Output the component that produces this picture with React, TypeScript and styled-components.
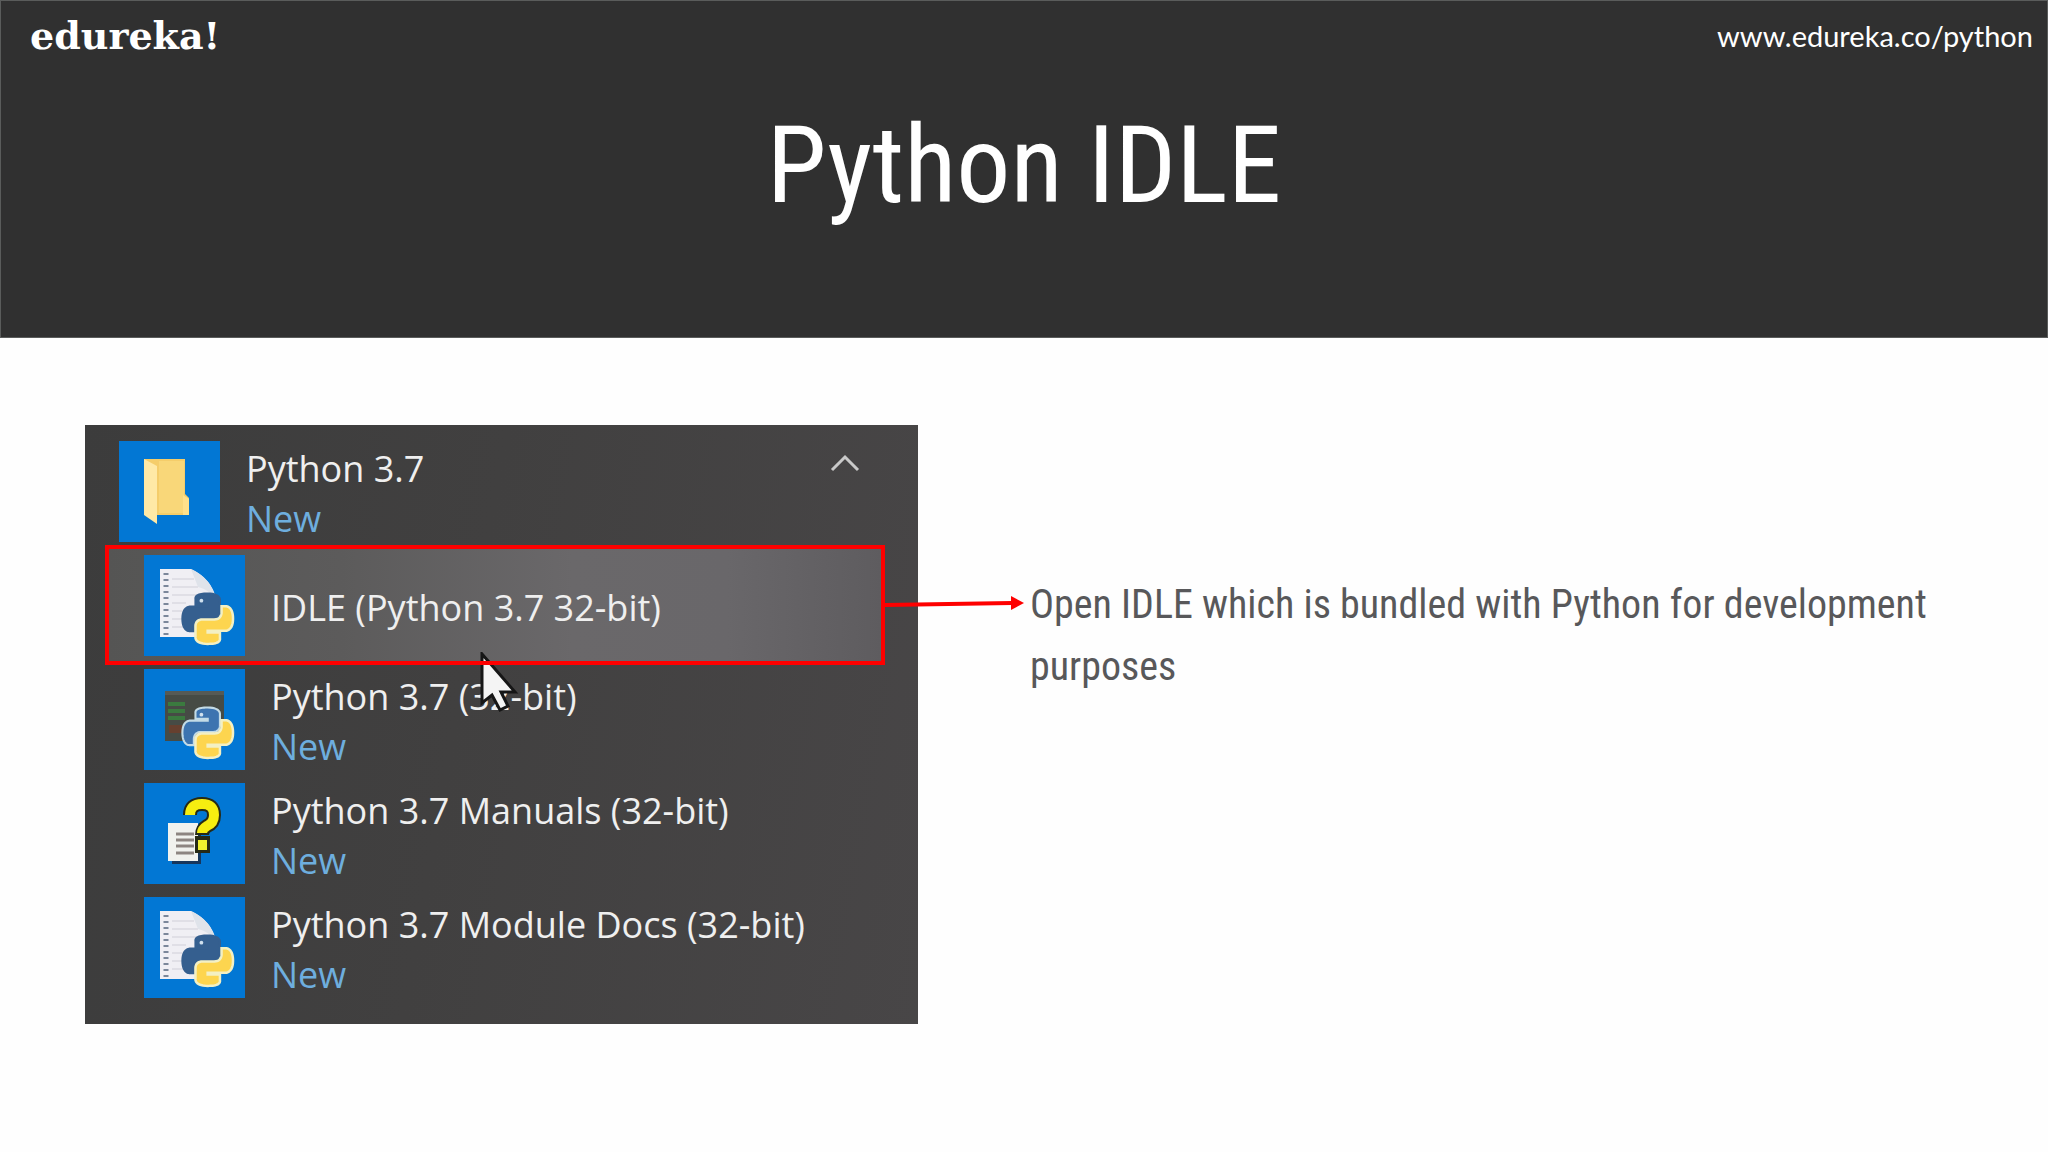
import React from "react";
import styled, { createGlobalStyle, css } from "styled-components";

const GlobalStyle = createGlobalStyle`
  *, *::before, *::after { box-sizing: border-box; }
  body { margin: 0; background: #fefefe; }
`;

const displayFont = css`
  font-family: "Roboto Condensed", "Liberation Sans Narrow", "DejaVu Sans Condensed", sans-serif;
`;

const Slide = styled.div`
  min-height: 100vh;
  background: #fefefe;
`;

const Header = styled.header`
  min-height: 338px;
  background: #303030;
  border: 1px solid #5a5c5b;
`;

const TopBar = styled.div`
  display: flex;
  justify-content: space-between;
  align-items: center;
  height: 70px;
  padding: 0 14px 0 29px;
`;

const Logo = styled.a`
  color: #ffffff;
  font: bold 38px/40px "DejaVu Serif", serif;
  text-decoration: none;
`;

const SiteLink = styled.a`
  color: #ffffff;
  font: 29px/40px Lato, sans-serif;
  text-decoration: none;
`;

const Title = styled.h1`
  ${displayFont}
  margin: 0;
  color: #ffffff;
  font-size: 108px;
  font-weight: 400;
  line-height: 188px;
  text-align: center;
`;

const Content = styled.main`
  display: grid;
  grid-template-columns: minmax(0, 7fr) minmax(0, 8fr);
  column-gap: 112px;
  align-items: start;
  padding: 87px 66px 64px 85px;
`;

const StartMenu = styled.nav`
  position: relative;
  padding: 9px 36px 20px 23px;
  background: linear-gradient(100deg, #3c3c3c 0%, #414040 45%, #484647 100%);
`;

const MenuList = styled.ul`
  margin: 0;
  padding: 0;
  list-style: none;
`;

const MenuEntry = styled.li`
  position: relative;
`;

const MenuButton = styled.button<{ $nested?: boolean; $active?: boolean }>`
  display: flex;
  align-items: center;
  gap: 26px;
  width: 100%;
  height: 114px;
  padding: 0 0 0 ${(p) => (p.$nested ? 36 : 11)}px;
  border: 0;
  background: ${(p) =>
    p.$active ? "linear-gradient(90deg, #555554 0%, #5c5b5b 30%, #6a686a 60%, #69676a 80%, #5e5c5f 100%)" : "transparent"};
  outline: ${(p) => (p.$active ? "4px solid #fe0000" : "none")};
  outline-offset: -1px;
  color: #efefef;
  font: 36px/50px "Open Sans", "Noto Sans", sans-serif;
  text-align: left;
`;

const Tile = styled.span`
  display: block;
  flex: none;
  width: 101px;
  height: 101px;
  background: #0277d4;
`;

const Labels = styled.span`
  display: flex;
  flex: 1;
  flex-direction: column;
  padding-top: 6px;
  white-space: nowrap;
`;

const NewTag = styled.span`
  color: #6eaede;
`;

const Chevron = styled.svg`
  flex: none;
  align-self: flex-start;
  width: 32px;
  height: 20px;
  margin: 19px 21px 0 0;
`;

const Arrow = styled.svg`
  position: absolute;
  top: 46px;
  left: 100%;
  width: 142px;
  height: 20px;
`;

const Pointer = styled.svg`
  position: absolute;
  top: 104px;
  left: 371px;
  width: 42px;
  height: 62px;
  z-index: 1;
`;

const Note = styled.p`
  ${displayFont}
  margin: 149px 0 0;
  color: #58585a;
  font-size: 40px;
  line-height: 62px;
`;

const Art = styled.svg`
  display: block;
  width: 100%;
  height: 100%;
`;

const SNAKE =
  "M14.25.18l.9.2.73.26.59.3.45.32.34.34.25.34.16.33.1.3.04.26.02.2-.01.13V8.5l-.05.63-.13.55-.21.46-.26.38-.3.31-.33.25-.35.19-.35.14-.33.1-.3.07-.26.04-.21.02H8.77l-.69.05-.59.14-.5.22-.41.27-.33.32-.27.35-.2.36-.15.37-.1.35-.07.32-.04.27-.02.21v3.06H3.17l-.21-.03-.28-.07-.32-.12-.35-.18-.36-.26-.36-.36-.35-.46-.32-.59-.28-.73-.21-.88-.14-1.05-.05-1.23.06-1.22.16-1.04.24-.87.32-.71.36-.57.4-.44.42-.33.42-.24.4-.16.36-.1.32-.05.24-.01h.16l.06.01h8.16v-.83H6.18l-.01-2.75-.02-.37.05-.34.11-.31.17-.28.25-.26.31-.23.38-.2.44-.18.51-.15.58-.12.64-.1.71-.06.77-.04.84-.02 1.27.05z";

const PythonLogo = ({ blue, edge }: { blue: string; edge: string }) => (
  <g transform="translate(38.5 38.5) scale(2.1)">
    <path d={SNAKE} fill={blue} stroke={edge} strokeWidth="1" />
    <path d={SNAKE} transform="rotate(180 12 12)" fill="#fdd54f" stroke="#f3f0c4" strokeWidth="1.2" />
    <circle cx="9" cy="3.4" r=".9" fill="#cfe0ee" />
  </g>
);

const FolderArt = () => (
  <Art viewBox="0 0 101 101" aria-hidden="true">
    <path d="M25 18h41v35l4 4v17H35z" fill="#f5cd6a" />
    <path d="M40 20h25v52H40z" fill="#f9d779" />
    <path d="M25 18l13 7v58L25 74z" fill="#ffe9a6" />
    <path d="M64 54l6 4v16h-6z" fill="#ffe08a" />
  </Art>
);

const NotebookArt = () => (
  <Art viewBox="0 0 101 101" aria-hidden="true">
    <path d="M16 14h31q21 10 25 30v28L58 82H16z" fill="#f0eff4" />
    <path d="M47 14q20 9 25 30-8-10-18-12z" fill="#dfe3ea" />
    <path d="M28 24h22M28 32h26M28 40h25M28 48h14M28 56h10M28 64h10M28 72h14" stroke="#e0dfe6" strokeWidth="2" />
    <path d="M22 18v62" stroke="#7b879a" strokeWidth="5" strokeDasharray="2 4" />
    <PythonLogo blue="#355f8f" edge="#355f8f" />
  </Art>
);

const ConsoleArt = () => (
  <Art viewBox="0 0 101 101" aria-hidden="true">
    <path d="M21 22h59v50H21z" fill="#464b45" />
    <path d="M21 22h59v4H21z" fill="#565a55" />
    <path d="M24 35h17M24 42h17M24 49h17" stroke="#3b7a3f" strokeWidth="4" />
    <path d="M25 60h13" stroke="#66402f" strokeWidth="8" />
    <PythonLogo blue="#3d74b0" edge="#c3dbe6" />
  </Art>
);

const HelpArt = () => (
  <Art viewBox="0 0 101 101" aria-hidden="true">
    <path d="M28 43h29v38H28z" fill="#16365c" />
    <path d="M24 40h30v38H24z" fill="#f1f2ee" />
    <path d="M32 51h18M32 57h18M32 63h18M32 70h18" stroke="#8d8581" strokeWidth="3" />
    <path d="M46 32q0-11 12-11t12 11q0 8-7 11-5 3-5 9" fill="none" stroke="#262a16" strokeWidth="14" />
    <path d="M51 53h15v17H51z" fill="#262a16" />
    <path d="M46 32q0-11 12-11t12 11q0 8-7 11-5 3-5 7" fill="none" stroke="#f6ee10" strokeWidth="10" />
    <path d="M54 57h9v10h-9z" fill="#f0f02e" />
  </Art>
);

const entries = [
  { label: "IDLE (Python 3.7 32-bit)", art: <NotebookArt />, active: true },
  { label: "Python 3.7 (32-bit)", art: <ConsoleArt />, active: false },
  { label: "Python 3.7 Manuals (32-bit)", art: <HelpArt />, active: false },
  { label: "Python 3.7 Module Docs (32-bit)", art: <NotebookArt />, active: false },
];

export default function App() {
  return (
    <Slide>
      <GlobalStyle />
      <Header>
        <TopBar>
          <Logo href="#home">edureka!</Logo>
          <SiteLink href="#python">www.edureka.co/python</SiteLink>
        </TopBar>
        <Title>Python IDLE</Title>
      </Header>
      <Content>
        <StartMenu aria-label="Start menu">
          <MenuList>
            <MenuEntry>
              <MenuButton type="button" aria-expanded="true">
                <Tile>
                  <FolderArt />
                </Tile>
                <Labels>
                  <span>Python 3.7</span>
                  <NewTag>New</NewTag>
                </Labels>
                <Chevron viewBox="0 0 32 20" aria-hidden="true">
                  <path d="M3 17L16 4l13 13" fill="none" stroke="#c9c9c9" strokeWidth="3" />
                </Chevron>
              </MenuButton>
            </MenuEntry>
            {entries.map((entry) => (
              <MenuEntry key={entry.label}>
                {entry.active && (
                  <Pointer viewBox="0 0 42 62" aria-hidden="true">
                    <path d="M3 2v49l10-8 8 15 8-4-7-14h14z" fill="#f4f4f4" stroke="#161616" strokeWidth="3" />
                    <path d="M0 9h42v4H0z" fill="#fe0000" />
                  </Pointer>
                )}
                <MenuButton type="button" $nested $active={entry.active}>
                  <Tile>{entry.art}</Tile>
                  <Labels>
                    <span>{entry.label}</span>
                    {!entry.active && <NewTag>New</NewTag>}
                  </Labels>
                </MenuButton>
                {entry.active && (
                  <Arrow viewBox="0 0 142 20" aria-hidden="true">
                    <path d="M3 11L130 9" stroke="#fe0000" strokeWidth="4" />
                    <path d="M129 2l13 7-13 7z" fill="#fe0000" />
                  </Arrow>
                )}
              </MenuEntry>
            ))}
          </MenuList>
        </StartMenu>
        <Note>Open IDLE which is bundled with Python for development purposes</Note>
      </Content>
    </Slide>
  );
}
